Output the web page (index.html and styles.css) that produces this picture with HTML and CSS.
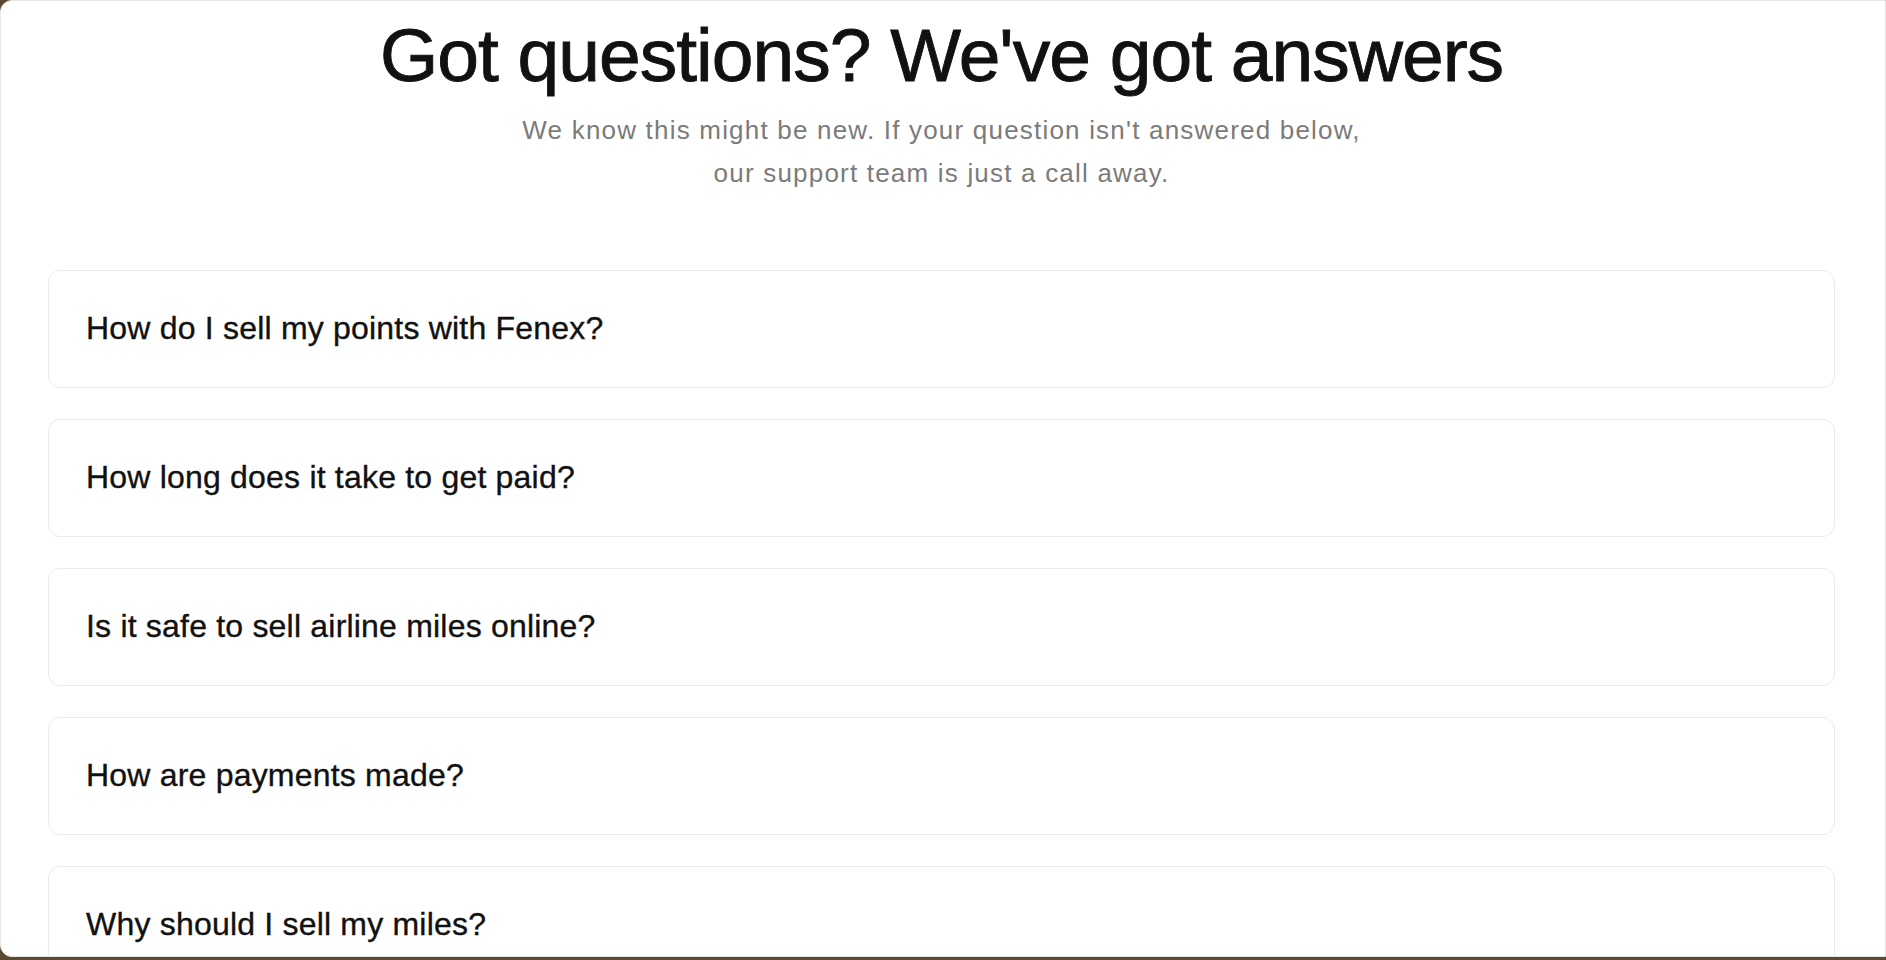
FILE: index.html
```html
<!DOCTYPE html>
<html lang="en">
<head>
<meta charset="utf-8">
<title>FAQ</title>
<link rel="stylesheet" href="styles.css">
</head>
<body>
<main class="panel">
  <header class="intro">
    <h1 class="title">Got questions? We've got answers</h1>
    <p class="subtitle">We know this might be new. If your question isn't answered below,<br>our support team is just a call away.</p>
  </header>
  <section class="faq">
    <div class="faq-item">How do I sell my points with Fenex?</div>
    <div class="faq-item">How long does it take to get paid?</div>
    <div class="faq-item">Is it safe to sell airline miles online?</div>
    <div class="faq-item">How are payments made?</div>
    <div class="faq-item">Why should I sell my miles?</div>
  </section>
</main>
</body>
</html>
```

FILE: styles.css
```css
html, body {
  margin: 0;
  padding: 0;
}
body {
  background: #5b4a2f;
  height: 960px;
  overflow: hidden;
  font-family: "Liberation Sans", Arial, sans-serif;
}
.panel {
  box-sizing: border-box;
  height: 957px;
  background: #ffffff;
  border: 1px solid #e6e6e6;
  border-radius: 12px 0 0 12px;
  overflow: hidden;
  padding: 17px 50px 0 47px;
}
.intro {
  text-align: center;
}
.title {
  margin: 0;
  font-size: 75px;
  line-height: 75px;
  font-weight: 400;
  letter-spacing: -1px;
  color: #111111;
  -webkit-text-stroke: 0.9px #111111;
}
.subtitle {
  margin: 16px 0 0;
  font-size: 26px;
  line-height: 43px;
  letter-spacing: 1.2px;
  color: #7b7b7b;
}
.faq {
  margin-top: 75px;
  display: flex;
  flex-direction: column;
  gap: 31px;
}
.faq-item {
  box-sizing: border-box;
  height: 118px;
  border: 1px solid #ebebeb;
  border-radius: 12px;
  display: flex;
  align-items: center;
  padding: 0 0 2px 37px;
  font-size: 32px;
  letter-spacing: 0.2px;
  color: #111111;
  -webkit-text-stroke: 0.35px #111111;
}
```
